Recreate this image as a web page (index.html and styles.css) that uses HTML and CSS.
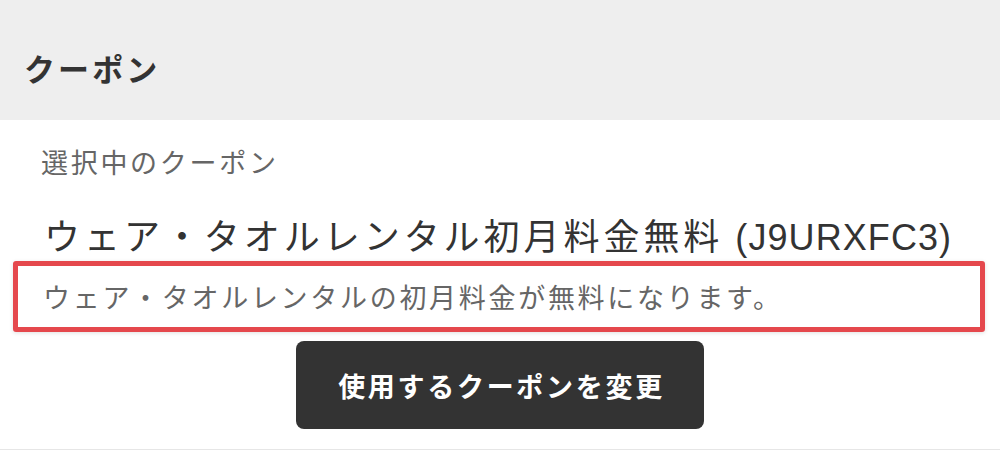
FILE: index.html
```html
<!DOCTYPE html>
<html lang="ja">
<head>
<meta charset="utf-8">
<link rel="stylesheet" href="styles.css">
</head>
<body>
<div class="panel">
  <div class="panel-header">クーポン</div>
  <div class="panel-body">
    <div class="label">選択中のクーポン</div>
    <div class="coupon-name">ウェア・タオルレンタル初月料金無料 <span class="code">(J9URXFC3)</span></div>
    <div class="highlight">
      <div class="coupon-desc">ウェア・タオルレンタルの初月料金が無料になります。</div>
    </div>
    <div class="actions">
      <button class="change-btn">使用するクーポンを変更</button>
    </div>
  </div>
</div>
</body>
</html>
```

FILE: styles.css
```css
html, body {
  margin: 0;
  padding: 0;
  background: #ffffff;
}
body {
  font-family: "Noto Sans CJK JP", "Noto Sans", sans-serif;
  color: #333333;
}
.panel {
  width: 1000px;
  height: 449px;
  border-bottom: 1px solid #e6e6e6;
  overflow: hidden;
}
.panel-header {
  height: 120px;
  box-sizing: border-box;
  background: #eeeeee;
  padding: 48px 0 0 24px;
  font-size: 31px;
  line-height: 40px;
  font-weight: 700;
  letter-spacing: 0.1em;
  color: #333333;
}
.panel-body {
  padding: 24px 0 0 0;
  display: flex;
  flex-direction: column;
}
.label {
  margin-left: 41px;
  font-size: 27px;
  line-height: 36px;
  letter-spacing: 0.1em;
  color: #666666;
}
.coupon-name {
  margin: 32px 0 0 44px;
  font-size: 36px;
  line-height: 44px;
  letter-spacing: 0.11em;
  color: #333333;
  white-space: nowrap;
}
.code {
  font-family: "Liberation Sans", "Noto Sans", sans-serif;
  letter-spacing: 0.03em;
}
.highlight {
  margin: 1px 0 0 13px;
  width: 972px;
  height: 71px;
  box-sizing: border-box;
  border: 5px solid #e5484d;
  border-radius: 3px;
  box-shadow: 0 1px 4px rgba(0, 0, 0, 0.12);
  display: flex;
  align-items: center;
  padding-left: 25px;
}
.coupon-desc {
  font-size: 27px;
  line-height: 36px;
  letter-spacing: 0.1em;
  color: #666666;
}
.actions {
  display: flex;
  justify-content: center;
  margin-top: 9px;
}
.change-btn {
  width: 408px;
  height: 88px;
  border: none;
  border-radius: 8px;
  background: #333333;
  color: #ffffff;
  font-family: "Noto Sans CJK JP", "Noto Sans", sans-serif;
  font-size: 27px;
  font-weight: 700;
  letter-spacing: 0.1em;
  padding: 0 0 0 3px;
  cursor: pointer;
}
```
